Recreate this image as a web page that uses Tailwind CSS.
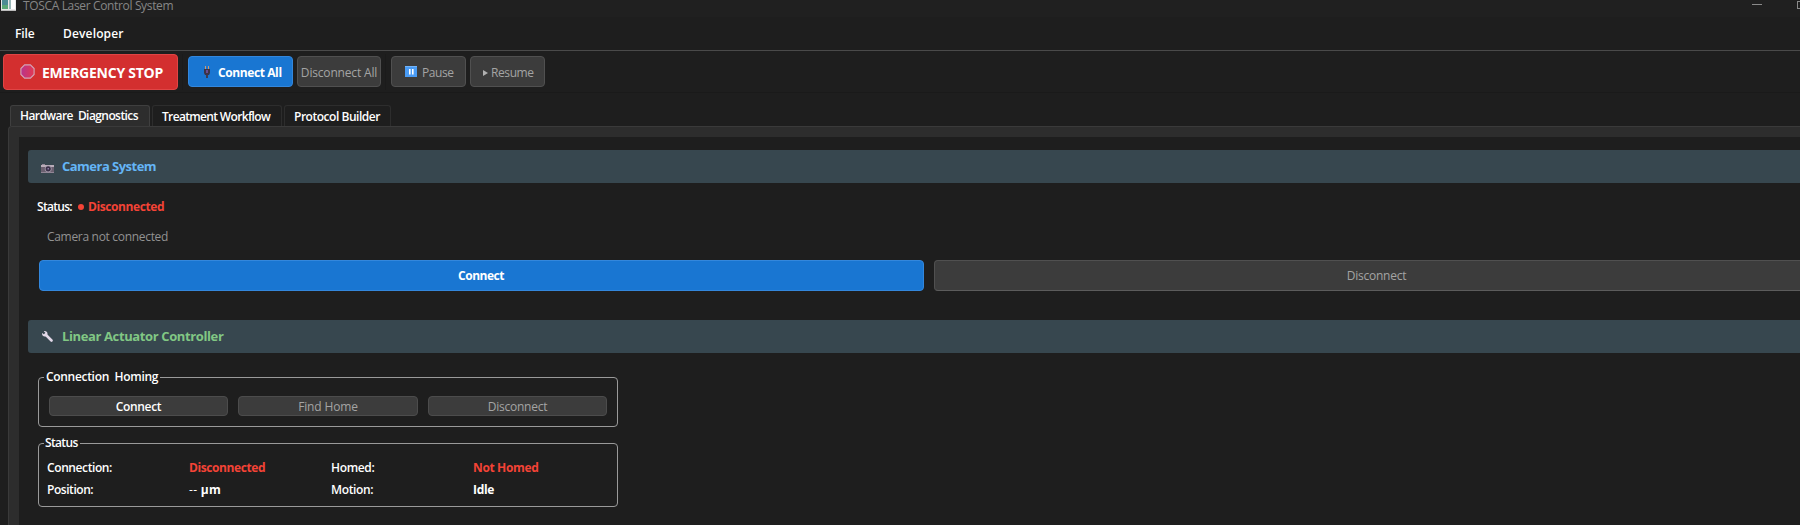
<!DOCTYPE html>
<html lang="en">
<head>
<meta charset="utf-8">
<title>TOSCA Laser Control System</title>
<script src="https://cdn.jsdelivr.net/npm/@tailwindcss/browser@4"></script>
</head>
<body class="w-[1800px] h-[525px] overflow-hidden bg-[#1e1e1e] font-['Open_Sans',sans-serif] text-xs text-white whitespace-nowrap">
<!-- Title bar -->
<header class="flex h-[17px] items-start bg-[#202020] text-[#868686]">
  <svg class="ml-px h-[11px] w-[15px] shrink-0" viewBox="0 0 15 11"><path fill="#e8e8e8" d="M0 0h15v11H0z"/><path fill="#4c8c94" d="M1 0h6v9H1z"/><path fill="#5aa878" d="M1 5h6v4H1z"/><path fill="#9ab8b8" d="M8 0h2v9H8z"/><path fill="#fff" d="M10 0h4v9h-4z"/><path fill="#bbb" d="M0 10h15v1H0z"/></svg>
  <span class="ml-[7px] h-[11px] leading-[11px] tracking-[-0.35px]">TOSCA Laser Control System</span>
  <span class="ml-auto mt-1 h-px w-[10px] bg-[#8a8a8a]"></span>
  <span class="ml-[35px] mt-px h-2 w-[3px] border border-r-0 border-[#8a8a8a]"></span>
</header>
<!-- Menu bar -->
<nav class="flex h-[34px] items-center border-b border-[#4a4a4a] pl-[15px] font-semibold">
  <span class="w-[48px] tracking-[-0.1px]">File</span><span class="tracking-[0.15px]">Developer</span>
</nav>
<!-- Toolbar -->
<div class="flex h-[42px] items-center border-b border-[#1a1a1a] pl-[3px] text-[#a4a4a4]">
  <div class="flex h-9 w-[175px] items-center rounded border border-[#e04545] bg-[#d32f2f] pl-4 text-sm font-bold text-white">
    <svg class="mr-[7px] size-[15px]" viewBox="0 0 15 15"><defs><linearGradient id="stop"><stop stop-color="#b8348c"/><stop offset="1" stop-color="#e43850"/></linearGradient></defs><path d="M4.6.9h5.8l3.7 3.7v5.8l-3.7 3.7H4.6L.9 10.4V4.6z" fill="url(#stop)" stroke="#d3a5b8" stroke-width="1.1"/></svg>
    <span class="pt-[2px] tracking-[-0.25px]">EMERGENCY STOP</span>
  </div>
  <span class="ml-1 h-9 w-px bg-[#1b1b1b]"></span>
  <div class="ml-[5px] flex h-[31px] w-[105px] items-center rounded border border-[#3387dc] bg-[#1976d2] pl-[15px] font-bold text-white">
    <svg class="mr-[8px] h-3 w-[6px]" viewBox="0 0 6 12"><path d="M1 0h1v3H1zM4 0h1v3H4z" fill="#d09a70"/><path d="M0 3h6v4L5 9H1L0 7z" fill="#3c3448"/><path d="M2 4h2v3H2z" fill="#6a4c91"/><path d="M2 9h2v3H2z" fill="#3d3b52"/></svg>
    <span class="pt-[2px] tracking-[-0.4px]">Connect All</span>
  </div>
  <div class="ml-1 flex h-[31px] w-[84px] items-center justify-center rounded border border-[#505050] bg-[#3c3c3c]"><span class="pt-[2px] tracking-[-0.17px]">Disconnect All</span></div>
  <span class="ml-1 h-9 w-px bg-[#1b1b1b]"></span>
  <div class="ml-[5px] flex h-[31px] w-[75px] items-center rounded border border-[#505050] bg-[#3c3c3c] pl-[13px]">
    <svg class="mr-[5px] h-[11px] w-3" viewBox="0 0 12 11"><path fill="#4a9cf5" d="M0 0h12v11H0z"/><path fill="#72b4fa" d="M0 0h12v1H0z"/><path fill="#fff" d="M4 3h1.6v5.5H4zM7 3h1.6v5.5H7z"/></svg>
    <span class="pt-[2px] tracking-[-0.4px]">Pause</span>
  </div>
  <div class="ml-1 flex h-[31px] w-[75px] items-center rounded border border-[#505050] bg-[#3c3c3c] pl-3">
    <svg class="mr-[3px] mt-[2px] h-[6px] w-[5px]" viewBox="0 0 5 6"><path fill="#b0b0b0" d="M0 0l5 3-5 3z"/></svg>
    <span class="pt-[2px] tracking-[-0.4px]">Resume</span>
  </div>
</div>
<!-- Tabs -->
<div class="flex h-[33px] items-end gap-[2px] pl-[10px] font-semibold">
  <div class="flex h-[21px] w-[140px] items-center rounded-t-[3px] border border-b-0 border-[#3f3f3f] bg-[#2d2d2d] pl-[9px] pb-px"><span class="tracking-[-0.58px]">Hardware&nbsp; Diagnostics</span></div>
  <div class="flex h-[21px] w-[130px] items-center rounded-t-[3px] border border-b-0 border-[#2d2d2d] pl-[9px] pt-px"><span class="tracking-[-0.66px]">Treatment Workflow</span></div>
  <div class="flex h-[21px] w-[107px] items-center rounded-t-[3px] border border-b-0 border-[#2d2d2d] pl-[9px] pt-px"><span class="tracking-[-0.47px]">Protocol Builder</span></div>
</div>
<!-- Tab page -->
<main class="ml-2 h-[399px] rounded-tl border-t border-l border-[#3a3a3a] bg-[#2d2d2d] pt-[10px] pl-[10px]">
 <div class="h-full bg-[#1e1e1e] pt-[13px] pl-[9px]">
  <div class="flex h-[33px] items-center rounded-l-[3px] bg-[#37474f] pl-[13px] text-[13px] font-bold text-[#64b5f6]">
    <svg class="mr-2 mt-[3px] h-[9px] w-[13px]" viewBox="0 0 13 9"><path fill="#b9adb9" d="M0 1h13v2H0z"/><path fill="#6b6070" d="M0 3h13v5H0z"/><path fill="#918696" d="M0 8h13v1H0zM1 0h3v1H1z"/><circle cx="7.2" cy="4.8" r="3.4" fill="#a69cac"/><circle cx="7.2" cy="4.8" r="2.6" fill="#3a3048"/><path fill="#8d7ca5" d="M6.5 4h1.5v1.5H6.5z"/></svg>
    <span class="pt-px tracking-[-0.52px]">Camera System</span>
  </div>
  <div class="mt-[14px] flex h-[19px] items-center pl-[9px]">
    <span class="w-[42px] font-semibold tracking-[-0.7px]">Status:</span>
    <span class="mr-1 -ml-px size-[6px] rounded-full bg-[#f44336]"></span>
    <span class="font-bold tracking-[-0.4px] text-[#f44336]">Disconnected</span>
  </div>
  <div class="mt-[11px] flex h-[19px] items-center pl-[19px] tracking-[-0.31px] text-[#929292]">Camera not connected</div>
  <div class="mt-[14px] flex h-[31px] gap-[10px] pl-[11px]">
    <div class="flex w-[885px] shrink-0 items-center justify-center rounded border border-[#3387dc] bg-[#1976d2] pt-px pr-px font-bold tracking-[-0.5px]">Connect</div>
    <div class="flex w-[885px] shrink-0 items-center justify-center rounded border border-[#505050] border-b-[#5c5c5c] bg-[#3c3c3c] pt-px tracking-[-0.25px] text-[#a4a4a4]">Disconnect</div>
  </div>
  <div class="mt-[29px] flex h-[33px] items-center rounded-l-[3px] bg-[#37474f] pl-[14px] text-[13px] font-bold text-[#81c784]">
    <svg class="mr-[9px] size-[11px]" viewBox="0 0 11 11"><path d="M3.5 3.5l6 6" stroke="#e2d8e8" stroke-width="2.6" stroke-linecap="round"/><path d="M1.8 0.2C4-.4 6 1.3 5.4 3.6L3.6 5.4C1.3 6-.4 4 .1 2l1.7 1.3 1.4-.2.1-1.4z" fill="#e2d8e8"/></svg>
    <span class="tracking-[-0.38px]">Linear Actuator Controller</span>
  </div>
  <fieldset class="mt-[14px] ml-[10px] h-[60px] w-[580px] rounded border border-[#9a9a9a] font-semibold">
    <legend class="ml-[5px] h-5 pr-[2px] pl-[2px] leading-5 tracking-[-0.31px]">Connection&nbsp; Homing</legend>
    <div class="mt-[9px] flex h-5 gap-[10px] pl-[10px] font-normal text-[#a4a4a4]">
      <div class="flex w-[179px] items-center justify-center rounded border border-[#4c4c4c] bg-[#3c3c3c] pt-px font-semibold tracking-[-0.33px] text-white">Connect</div>
      <div class="flex w-[180px] items-center justify-center rounded border border-[#4c4c4c] bg-[#3c3c3c] pt-px tracking-[-0.15px]">Find Home</div>
      <div class="flex w-[179px] items-center justify-center rounded border border-[#4c4c4c] bg-[#3c3c3c] pt-px tracking-[-0.25px]">Disconnect</div>
    </div>
  </fieldset>
  <fieldset class="mt-[6px] ml-[10px] h-[74px] w-[580px] rounded border border-[#9a9a9a] font-semibold">
    <legend class="ml-[5px] h-5 pr-[2px] pl-[1px] leading-5 tracking-[-0.65px]">Status</legend>
    <div class="mt-[4px] grid grid-cols-[142px_142px_142px_1fr] auto-rows-[22px] items-center pl-2">
      <span class="tracking-[-0.4px]">Connection:</span><span class="font-bold tracking-[-0.4px] text-[#f44336]">Disconnected</span><span class="tracking-[-0.35px]">Homed:</span><span class="font-bold tracking-[-0.35px] text-[#f44336]">Not Homed</span>
      <span class="tracking-[-0.45px]">Position:</span><span class="font-bold tracking-[0.3px]"><span class="font-normal">-- </span>µm</span><span class="tracking-[-0.35px]">Motion:</span><span class="font-bold tracking-[-0.3px]">Idle</span>
    </div>
  </fieldset>
 </div>
</main>
</body>
</html>
